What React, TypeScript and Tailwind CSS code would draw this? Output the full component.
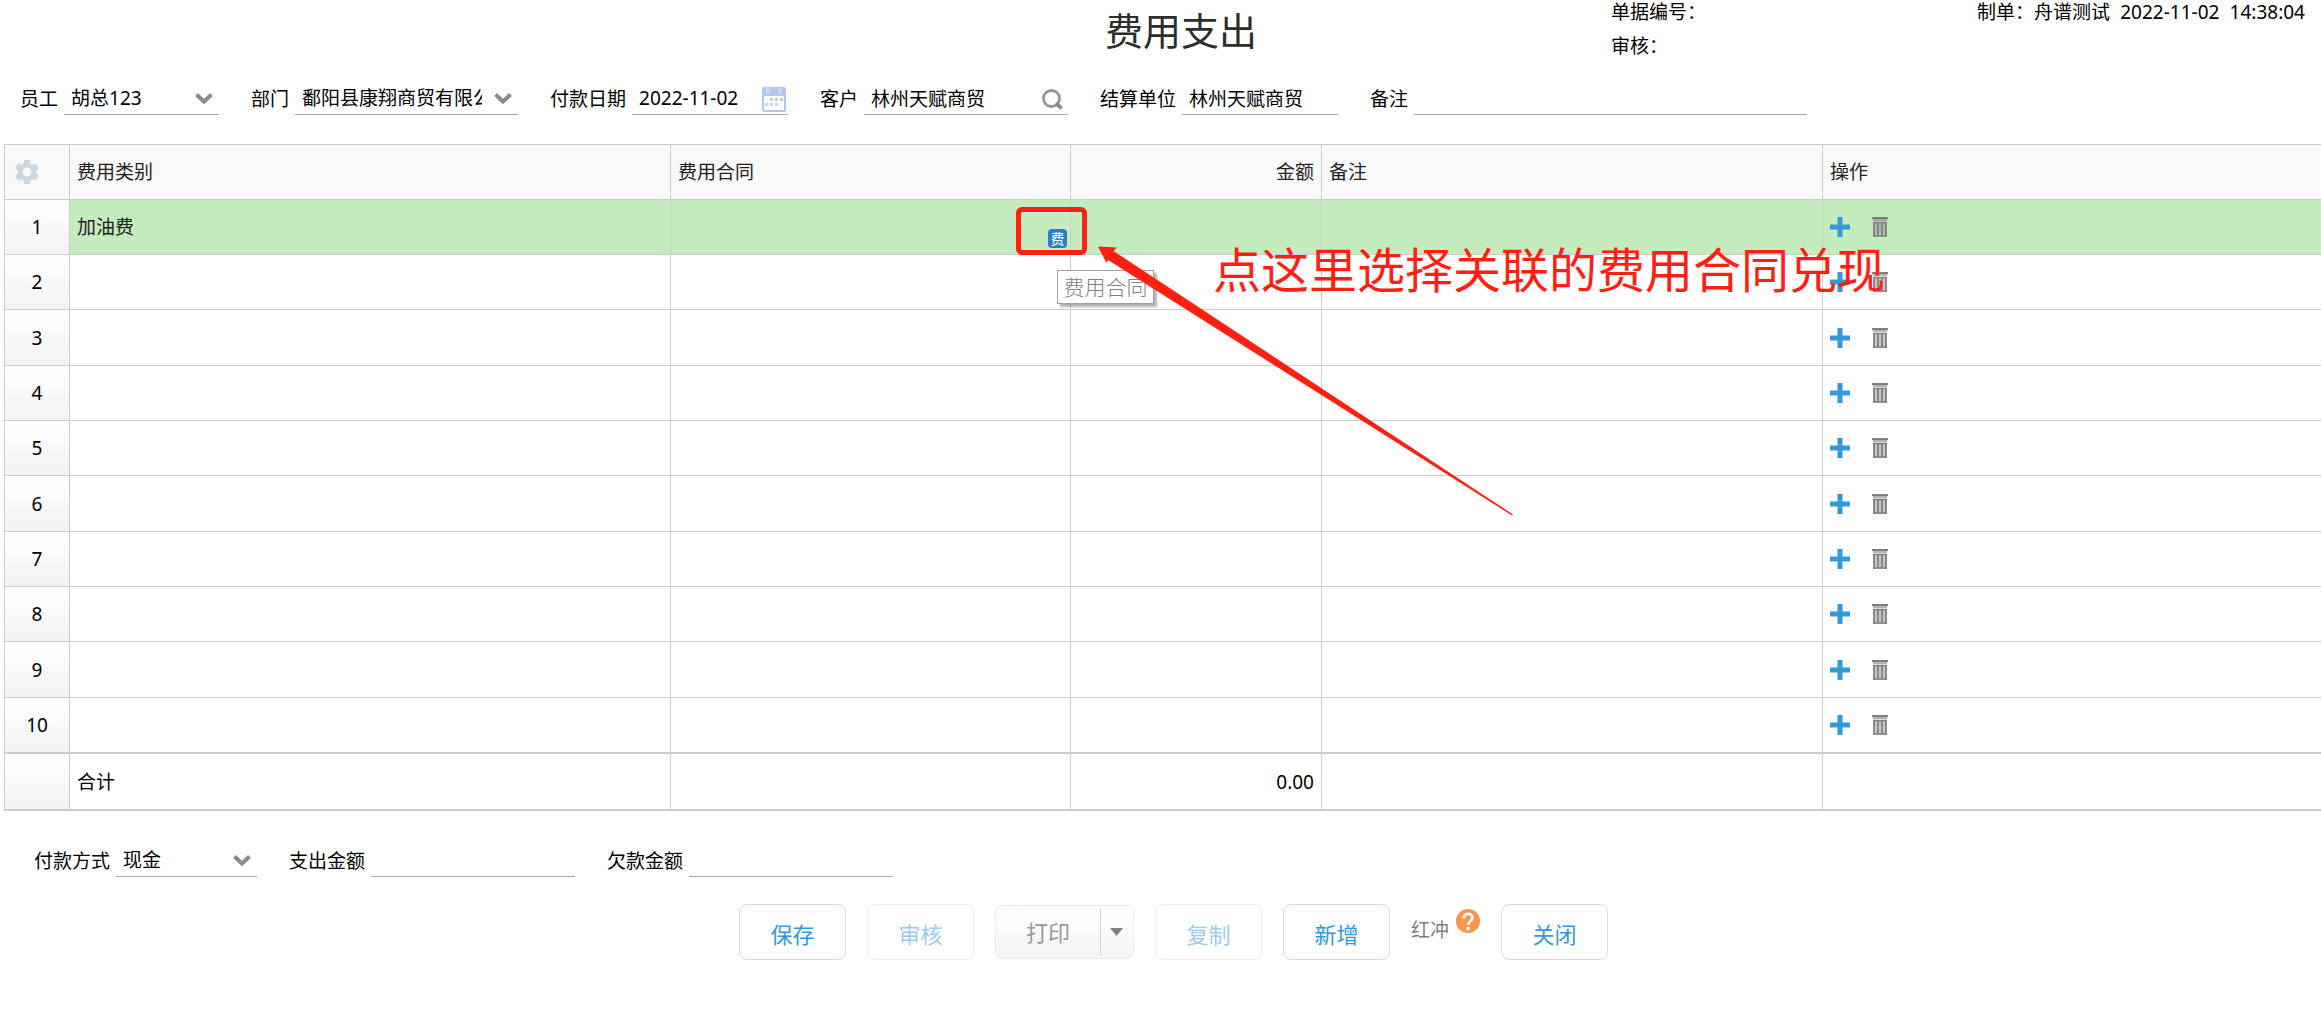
import { ReactNode, useState } from "react";
import { MdSettings } from "react-icons/md";

const rows = [
  { id: 1, category: "加油费" },
  { id: 2, category: "" },
  { id: 3, category: "" },
  { id: 4, category: "" },
  { id: 5, category: "" },
  { id: 6, category: "" },
  { id: 7, category: "" },
  { id: 8, category: "" },
  { id: 9, category: "" },
  { id: 10, category: "" },
];

function ChevronIcon() {
  return (
    <svg width="18" height="12" viewBox="0 0 18 12" fill="none">
      <path
        d="M1.5 1.5 L9 8.5 L16.5 1.5"
        stroke="#8a8a8a"
        strokeWidth="4"
      />
    </svg>
  );
}

function CalendarIcon() {
  return (
    <svg width="24" height="26" viewBox="0 0 24 26">
      <rect x="0" y="1" width="24" height="25" rx="2" fill="#b4c6ea" />
      <rect x="2" y="10" width="20" height="14" fill="#fff" />
      <rect x="4" y="0" width="4" height="8" rx="2" fill="#cbd7f1" />
      <rect x="16" y="0" width="4" height="8" rx="2" fill="#cbd7f1" />
      <path
        d="M8 13.5h3M13 13.5h3M18 13.5h3M3 18.5h3M8 18.5h3M13 18.5h3"
        stroke="#c3d1ee"
        strokeWidth="3"
      />
    </svg>
  );
}

function SearchIcon() {
  return (
    <svg width="24" height="21" viewBox="0 0 24 21" fill="none">
      <circle cx="9.5" cy="9.5" r="8" stroke="#959595" strokeWidth="2.8" />
      <path d="M14 14 L19.5 19.5" stroke="#8a8a8a" strokeWidth="3.8" />
    </svg>
  );
}

function PlusIcon() {
  return (
    <svg width="20" height="20" viewBox="0 0 20 20">
      <path d="M7.5 0h5v7.5H20v5h-7.5V20h-5v-7.5H0v-5h7.5z" fill="#3498db" />
    </svg>
  );
}

function TrashIcon() {
  return (
    <svg width="16" height="20" viewBox="0 0 16 20">
      <rect x="0" y="0" width="16" height="2" fill="#808080" />
      <rect x="1" y="2" width="14" height="2" fill="#808080" opacity="0.6" />
      <rect x="1" y="5" width="14" height="15" fill="#808080" opacity="0.45" />
      <path
        d="M2 5v15M6 6v13M10 6v13M14 5v15M1 5.5h14M1 19h14"
        stroke="#808080"
        strokeWidth="1.7"
      />
    </svg>
  );
}

function HelpIcon() {
  return (
    <svg width="24" height="24" viewBox="0 0 24 24" fill="none">
      <circle cx="12" cy="12" r="12" fill="#f79650" />
      <path
        d="M7.8 9.2 C7.8 3.4 16.4 3.6 16.4 8.6 C16.4 12 12.2 12 12.2 16"
        stroke="#fff"
        strokeWidth="2.8"
      />
      <circle cx="12.2" cy="19.6" r="1.8" fill="#fff" />
    </svg>
  );
}

function Field({
  id,
  label,
  children,
}: {
  id: string;
  label: string;
  children: ReactNode;
}) {
  return (
    <div className="flex items-center gap-1.5">
      <label htmlFor={id} className="flex-none">
        {label}
      </label>
      {children}
    </div>
  );
}

function TextInput({
  id,
  value = "",
  width,
  icon,
}: {
  id: string;
  value?: string;
  width: string;
  icon?: ReactNode;
}) {
  return (
    <div className={`relative ${width}`}>
      <input
        id={id}
        type="text"
        defaultValue={value}
        className="block h-8 w-full border-b border-[#a8a8a8] pb-0.5 pl-[7px] outline-none"
      />
      {icon && (
        <button
          type="button"
          aria-label="选择"
          className="absolute inset-y-0 right-0.5 flex items-center"
        >
          {icon}
        </button>
      )}
    </div>
  );
}

function SelectInput({
  id,
  value,
  width,
}: {
  id: string;
  value: string;
  width: string;
}) {
  return (
    <div className={`relative ${width}`}>
      <select
        id={id}
        defaultValue={value}
        className="block h-8 w-full appearance-none border-b border-[#a8a8a8] pr-9 pb-0.5 pl-[7px] outline-none"
      >
        <option>{value}</option>
      </select>
      <div className="pointer-events-none absolute inset-y-0 right-1.5 flex items-center">
        <ChevronIcon />
      </div>
    </div>
  );
}

function ActionButton({
  children,
  disabled,
}: {
  children: ReactNode;
  disabled?: boolean;
}) {
  return (
    <button
      type="button"
      disabled={disabled}
      className="h-14 w-[107px] rounded-lg border border-[#dadada] bg-white pt-1 text-[22px] text-[#3498db] disabled:opacity-50"
    >
      {children}
    </button>
  );
}

// red marker drawn over the grid: frame, tooltip, arrow and note
function Annotation() {
  return (
    <div className="pointer-events-none absolute top-0 left-0">
      <div className="absolute top-[62px] left-[1011px] h-12 w-[71px] rounded-md border-5 border-[#ff2011]" />
      <div className="absolute top-[125px] left-[1052px] h-[34px] w-[97px] border border-[#a0a0a0] bg-white/80 text-center text-[21px] leading-8 font-light text-[#808080] shadow-[3px_3px_2px_rgba(0,0,0,0.3)]">
        费用合同
      </div>
      <svg
        className="absolute top-[101px] left-[1093px]"
        width="416"
        height="272"
        viewBox="0 0 416 272"
      >
        <path
          d="M0 0.5 L19 1.5 L15.5 5 L415 268.5 L414 269.5 L10 14 L8.5 17 Z"
          fill="#ff2011"
        />
      </svg>
      <p className="absolute top-[97px] left-[1208px] text-[48px] leading-14 whitespace-nowrap text-[#ff2011]">
        点这里选择关联的费用合同兑现
      </p>
    </div>
  );
}

export default function App() {
  const [selectedId, setSelectedId] = useState(1);

  return (
    <main className="bg-white font-['Noto_Sans','Noto_Sans_CJK_SC',sans-serif] text-[19px] leading-5 text-black">
      <header className="grid grid-cols-[1fr_860px_710px]">
        <h1 className="col-start-2 text-center text-[38px] leading-[60px] text-[#2d2d2d]">
          费用支出
        </h1>
        <div className="flex justify-between pr-4 leading-6">
          <div className="flex flex-col gap-2.5">
            <p>单据编号：</p>
            <p>审核：</p>
          </div>
          <div className="flex w-[328px] justify-between">
            <span>制单：舟谱测试</span>
            <span>2022-11-02</span>
            <span>14:38:04</span>
          </div>
        </div>
      </header>

      <form className="mt-[23px] flex gap-8 pl-5">
        <Field id="employee" label="员工">
          <SelectInput id="employee" value="胡总123" width="w-[155px]" />
        </Field>
        <Field id="department" label="部门">
          <SelectInput
            id="department"
            value="鄱阳县康翔商贸有限公司"
            width="w-[223px]"
          />
        </Field>
        <Field id="date" label="付款日期">
          <TextInput
            id="date"
            value="2022-11-02"
            width="w-[156px]"
            icon={<CalendarIcon />}
          />
        </Field>
        <Field id="customer" label="客户">
          <TextInput
            id="customer"
            value="林州天赋商贸"
            width="w-[204px]"
            icon={<SearchIcon />}
          />
        </Field>
        <Field id="settlement" label="结算单位">
          <TextInput id="settlement" value="林州天赋商贸" width="w-[156px]" />
        </Field>
        <Field id="remark" label="备注">
          <TextInput id="remark" width="w-[393px]" />
        </Field>
      </form>

      <div className="relative mt-[29px] ml-1 border-t border-l border-[#ccc]">
        <table className="w-full table-fixed border-separate border-spacing-0 [&_td]:border-r [&_td]:border-b [&_td]:border-[#ccc] [&_td]:px-[7px] [&_td:last-child]:border-r-0 [&_th]:border-r [&_th]:border-b [&_th]:border-[#ccc] [&_th]:px-[7px] [&_th]:text-left [&_th]:font-normal [&_th:last-child]:border-r-0">
          <colgroup>
            <col className="w-[65px]" />
            <col className="w-[601px]" />
            <col className="w-[400px]" />
            <col className="w-[251px]" />
            <col className="w-[501px]" />
            <col />
          </colgroup>
          <thead className="bg-[#f9f9f9] text-[#222]">
            <tr className="h-[55px]">
              <th>
                <button type="button" aria-label="设置" className="block">
                  <MdSettings size={30} color="#ccd6de" />
                </button>
              </th>
              <th>费用类别</th>
              <th>费用合同</th>
              <th>
                <div className="text-right">金额</div>
              </th>
              <th>备注</th>
              <th>操作</th>
            </tr>
          </thead>
          <tbody>
            {rows.map((row) => {
              return (
                <tr
                  key={row.id}
                  onClick={() => setSelectedId(row.id)}
                  className={
                    row.id === selectedId
                      ? "h-[55px] bg-[#c5ecbf] nth-[3n]:h-14"
                      : "h-[55px] nth-[3n]:h-14"
                  }
                >
                  <td className="bg-linear-to-b from-white to-[#f3f3f3] text-center">
                    {row.id}
                  </td>
                  <td className="text-[#222]">{row.category}</td>
                  <td className="relative">
                    {row.id === selectedId && (
                      <button
                        type="button"
                        title="费用合同"
                        className="absolute right-[3px] bottom-1.5 size-[19px] rounded-sm bg-[#2a7fc4] text-sm leading-[19px] text-white"
                      >
                        费
                      </button>
                    )}
                  </td>
                  <td />
                  <td />
                  <td>
                    <div className="flex items-center gap-[22px]">
                      <button type="button" aria-label="新增行">
                        <PlusIcon />
                      </button>
                      <button type="button" aria-label="删除行">
                        <TrashIcon />
                      </button>
                    </div>
                  </td>
                </tr>
              );
            })}
          </tbody>
          <tfoot>
            <tr className="h-[58px] [&>td]:border-t [&>td]:border-b-2">
              <td className="bg-linear-to-b from-white to-[#f3f3f3]" />
              <td>合计</td>
              <td />
              <td className="text-right">0.00</td>
              <td />
              <td />
            </tr>
          </tfoot>
        </table>
        <Annotation />
      </div>

      <form className="mt-[34px] flex gap-8 pl-[34px]">
        <Field id="method" label="付款方式">
          <SelectInput id="method" value="现金" width="w-[141px]" />
        </Field>
        <Field id="paid" label="支出金额">
          <TextInput id="paid" width="w-[204px]" />
        </Field>
        <Field id="debt" label="欠款金额">
          <TextInput id="debt" width="w-[204px]" />
        </Field>
      </form>

      <div className="mt-[27px] flex justify-center gap-[21px] pl-[26px]">
        <ActionButton>保存</ActionButton>
        <ActionButton disabled>审核</ActionButton>
        <div className="flex h-[54px] w-[139px] items-center self-center rounded-lg border border-[#ebebeb] bg-linear-to-b from-white to-[#f5f5f5]">
          <button
            type="button"
            disabled
            className="h-12 flex-1 border-r border-[#d4d4d4] text-[22px] text-[#999]"
          >
            打印
          </button>
          <button
            type="button"
            aria-label="打印选项"
            className="flex h-12 w-8 items-center justify-center"
          >
            <svg width="13" height="8" viewBox="0 0 13 8">
              <path d="M0 0h13L6.5 8z" fill="#808080" />
            </svg>
          </button>
        </div>
        <ActionButton disabled>复制</ActionButton>
        <ActionButton>新增</ActionButton>
        <div className="flex items-start gap-[7px]">
          <button
            type="button"
            disabled
            className="leading-[52px] text-[#808080]"
          >
            红冲
          </button>
          <button type="button" aria-label="帮助" className="mt-[5px]">
            <HelpIcon />
          </button>
        </div>
        <ActionButton>关闭</ActionButton>
      </div>
    </main>
  );
}
